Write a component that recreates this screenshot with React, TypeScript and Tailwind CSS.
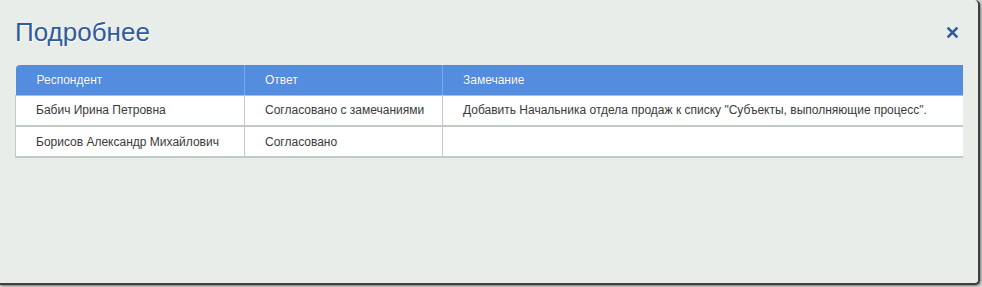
import React from "react";

const rows = [
  {
    name: "Бабич Ирина Петровна",
    answer: "Согласовано с замечаниями",
    note: 'Добавить Начальника отдела продаж к списку "Субъекты, выполняющие процесс".',
  },
  { name: "Борисов Александр Михайлович", answer: "Согласовано", note: "" },
];

const App = () => {
  return (
    <div className="w-[982px] h-[287px] bg-[#cfd3d0] overflow-hidden" style={{ fontFamily: '"Liberation Sans", Arial, sans-serif' }}>
      <div className="w-[980px] h-[285px] bg-[#e9edea] rounded-tr-[5px] rounded-br-[5px] border-r-2 border-b-2 border-[#3d3f3e] shadow-[1px_1px_2px_rgba(0,0,0,0.4)] px-[15px]">
        <div className="flex items-center justify-between h-[65px] pb-[1px]">
          <h2 className="text-[26px] leading-none text-[#2e5c9d] [text-shadow:1px_1px_0_#fff]">Подробнее</h2>
          <button className="mr-[4px] text-[#2e5a98]">
            <svg width="13" height="13" viewBox="0 0 12 12">
              <path d="M1.5 1.5 L10.5 10.5 M10.5 1.5 L1.5 10.5" stroke="currentColor" strokeWidth="2.4" strokeLinecap="butt" />
            </svg>
          </button>
        </div>
        <table className="w-[948px] table-fixed border-collapse text-[12px] whitespace-nowrap">
          <colgroup>
            <col className="w-[229px]" />
            <col className="w-[198px]" />
            <col />
          </colgroup>
          <thead>
            <tr className="h-[30px] bg-[#548de0] text-white text-left [text-shadow:0_0_1px_rgba(0,0,0,0.3)]">
              <th className="font-normal pl-[21px] rounded-tl-[4px] border-r border-[#7eaaea] border-b border-b-[#a7c2ea]">Респондент</th>
              <th className="font-normal pl-[20px] border-r border-[#7eaaea] border-b border-b-[#a7c2ea]">Ответ</th>
              <th className="font-normal pl-[20px] border-b border-b-[#a7c2ea]">Замечание</th>
            </tr>
          </thead>
          <tbody>
            {rows.map((r) => (
              <tr key={r.name} className="h-[31px] bg-white text-[#3a3a3a] border-b-2 border-[#c3cac6]">
                <td className="pl-[20px] border-l border-r border-[#c3cac6]">{r.name}</td>
                <td className="pl-[20px] border-r border-[#c3cac6]">{r.answer}</td>
                <td className="pl-[20px]">{r.note}</td>
              </tr>
            ))}
          </tbody>
        </table>
      </div>
    </div>
  );
};

export default App;
